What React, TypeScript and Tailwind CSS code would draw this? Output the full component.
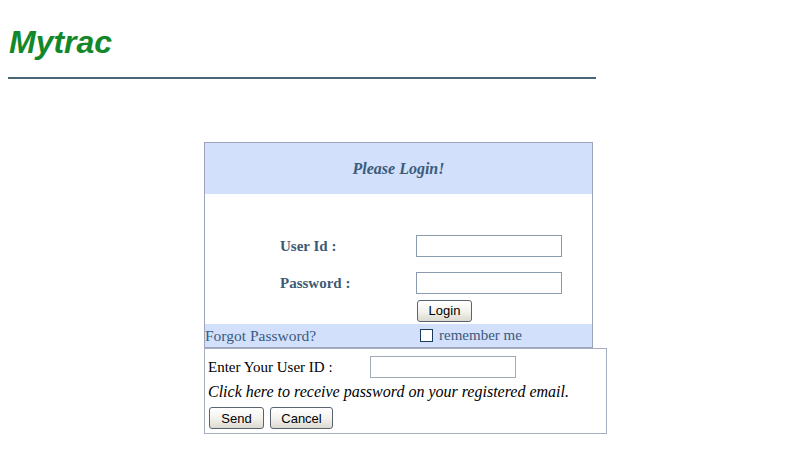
import React from "react";

const btn =
  "h-[22px] rounded-[3px] border border-[#5a6470] bg-gradient-to-b from-white via-[#f4f3ee] to-[#dcdad0] text-[13px] leading-none text-black px-0 font-['Liberation_Sans',Arial,sans-serif]";
const input =
  "h-[22px] w-[146px] border border-[#8a9bb0] bg-white outline-none";

export default function App() {
  return (
    <div className="min-h-[466px] w-[800px] bg-white">
      <div className="pt-[24px] pl-[9px]">
        <h1 className="text-[32px] leading-[37px] font-bold italic text-[#13882a] font-['Liberation_Sans',Arial,sans-serif]">
          Mytrac
        </h1>
      </div>
      <div className="ml-[8px] mt-[16px] h-[2px] w-[588px] bg-[#4b6677]" />

      <div className="ml-[204px] mt-[63px] w-[389px] border border-[#9ba4bb] font-['Liberation_Serif','Times_New_Roman',serif]">
        <div className="flex h-[51px] items-center justify-center bg-[#d2e0fb] text-[16px] font-bold italic text-[#3a5b7a]">
          Please Login!
        </div>
        <div className="grid grid-cols-[136px_1fr] pl-[75px] pt-[41px]">
          <div className="flex h-[22px] items-center text-[15px] font-bold text-[#3d5a74]">
            User Id :
          </div>
          <input className={input} />
          <div className="mt-[15px] flex h-[22px] items-center text-[15px] font-bold text-[#3d5a74]">
            Password :
          </div>
          <input type="password" className={`${input} mt-[15px]`} />
          <div />
          <div className="mt-[4px] pl-[1px]">
            <button className={`${btn} w-[55px]`}>Login</button>
          </div>
        </div>
        <div className="mt-[2px] flex h-[23px] items-center bg-[#d2e0fb] text-[#3a5a80]">
          <span className="w-[215px] text-[15.5px]">Forgot Password?</span>
          <span className="h-[13px] w-[13px] border border-[#1c3b5a] bg-white" />
          <span className="ml-[6px] text-[15px]">remember me</span>
        </div>
      </div>

      <div className="ml-[204px] w-[403px] border border-[#a8aec2] pb-[4px] pl-[3px] pt-[7px] font-['Liberation_Serif','Times_New_Roman',serif] text-[15px] text-black">
        <div className="flex h-[22px] items-center">
          <span className="w-[162px]">Enter Your User ID :</span>
          <input className={`${input} h-[21px] border-[#a0aab8]`} />
        </div>
        <div className="mt-[3px] text-[16px] italic leading-[22px]">
          Click here to receive password on your registered email.
        </div>
        <div className="mt-[4px] flex gap-[6px] pl-[1px]">
          <button className={`${btn} w-[55px]`}>Send</button>
          <button className={`${btn} w-[63px]`}>Cancel</button>
        </div>
      </div>
    </div>
  );
}
